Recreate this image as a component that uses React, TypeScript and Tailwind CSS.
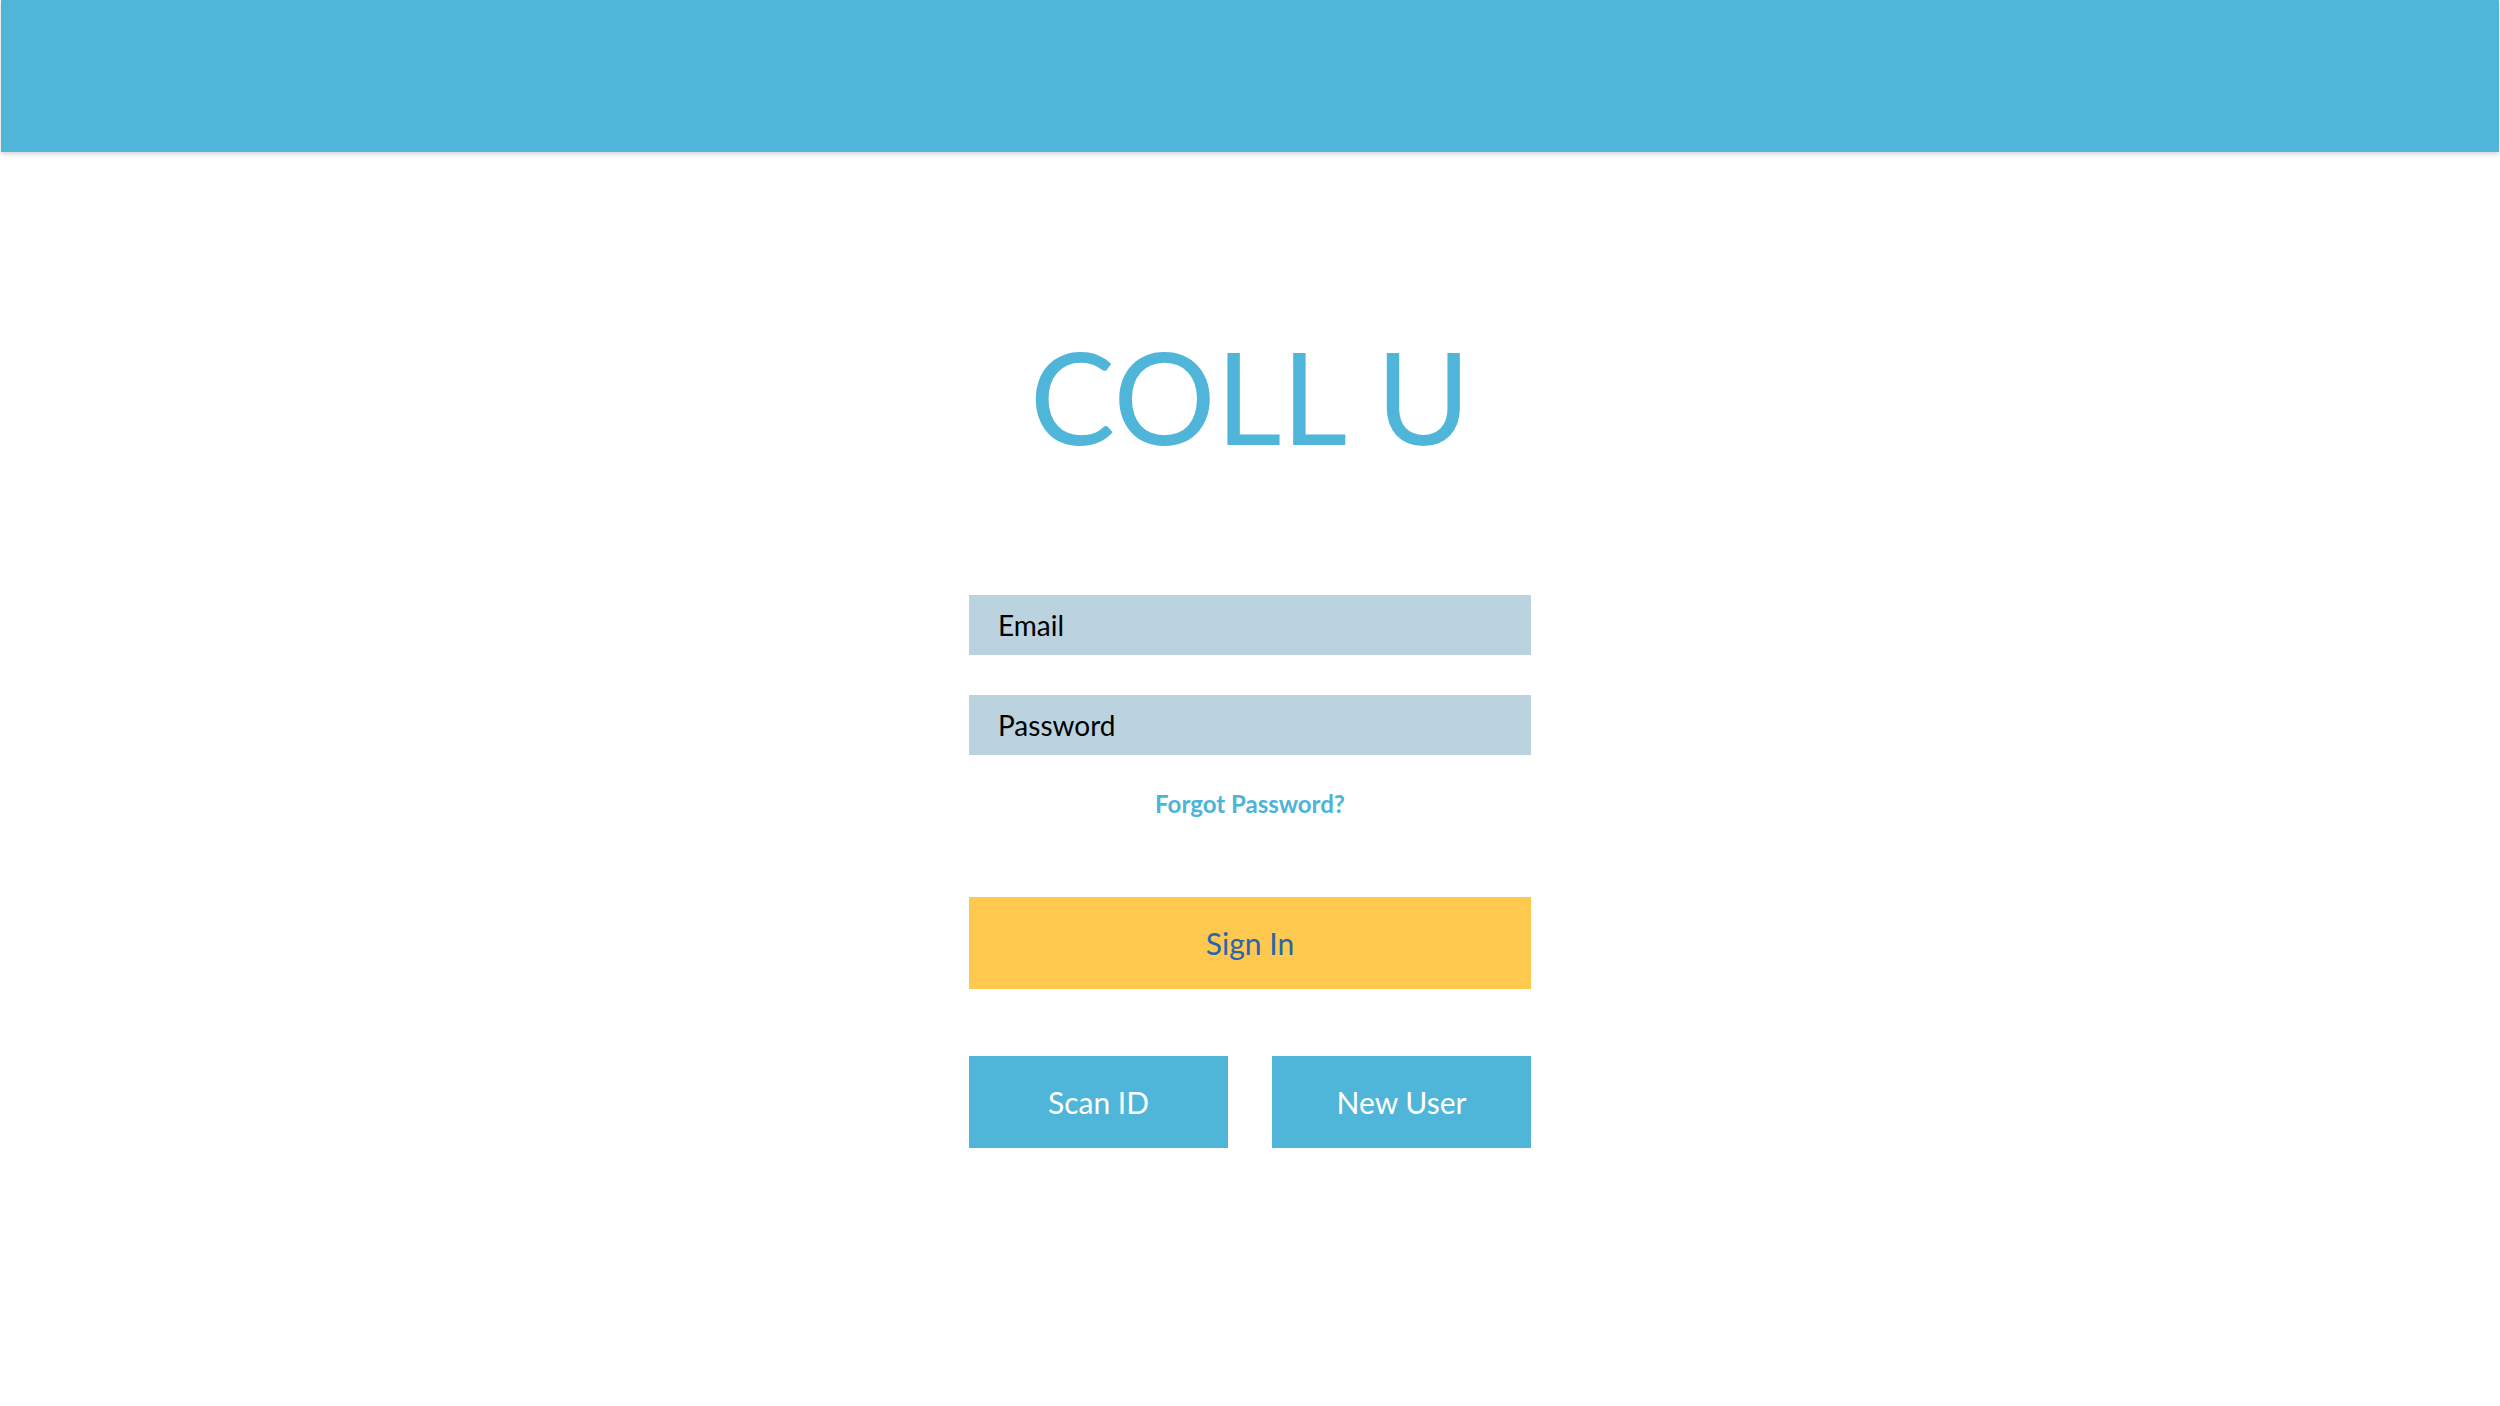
export default function App() {
  return (
    <div className="min-h-screen bg-white" style={{ fontFamily: "Lato, 'Open Sans', sans-serif" }}>
      <header className="h-[152px] mx-px bg-[#4fb5d9] shadow-[0_2px_5px_rgba(0,0,0,0.18)]" />

      <main className="flex flex-col items-center">
        <h1 className="mt-[180px] text-[128px] leading-[128px] font-normal text-[#4fb5d9]">
          COLL U
        </h1>

        <form className="mt-[135px] w-[562px] flex flex-col" onSubmit={(e) => e.preventDefault()}>
          <input
            type="email"
            placeholder="Email"
            className="h-[60px] w-full bg-[#bbd3df] px-[29px] text-[28px] text-black placeholder:text-black outline-none"
          />
          <input
            type="password"
            placeholder="Password"
            className="mt-[40px] h-[60px] w-full bg-[#bbd3df] px-[29px] text-[28px] text-black placeholder:text-black outline-none"
          />

          <a href="#" className="mt-[37px] self-center text-[24px] leading-[24px] font-bold text-[#4cb4da]">
            Forgot Password?
          </a>

          <button
            type="submit"
            className="mt-[81px] h-[92px] w-full bg-[#ffc84e] text-[30px] text-[#2a64ad]"
          >
            Sign In
          </button>

          <div className="mt-[67px] grid grid-cols-2 gap-[44px]">
            <button type="button" className="h-[92px] bg-[#4fb5d9] text-[30px] text-white">
              Scan ID
            </button>
            <button type="button" className="h-[92px] bg-[#4fb5d9] text-[30px] text-white">
              New User
            </button>
          </div>
        </form>
      </main>
    </div>
  );
}
